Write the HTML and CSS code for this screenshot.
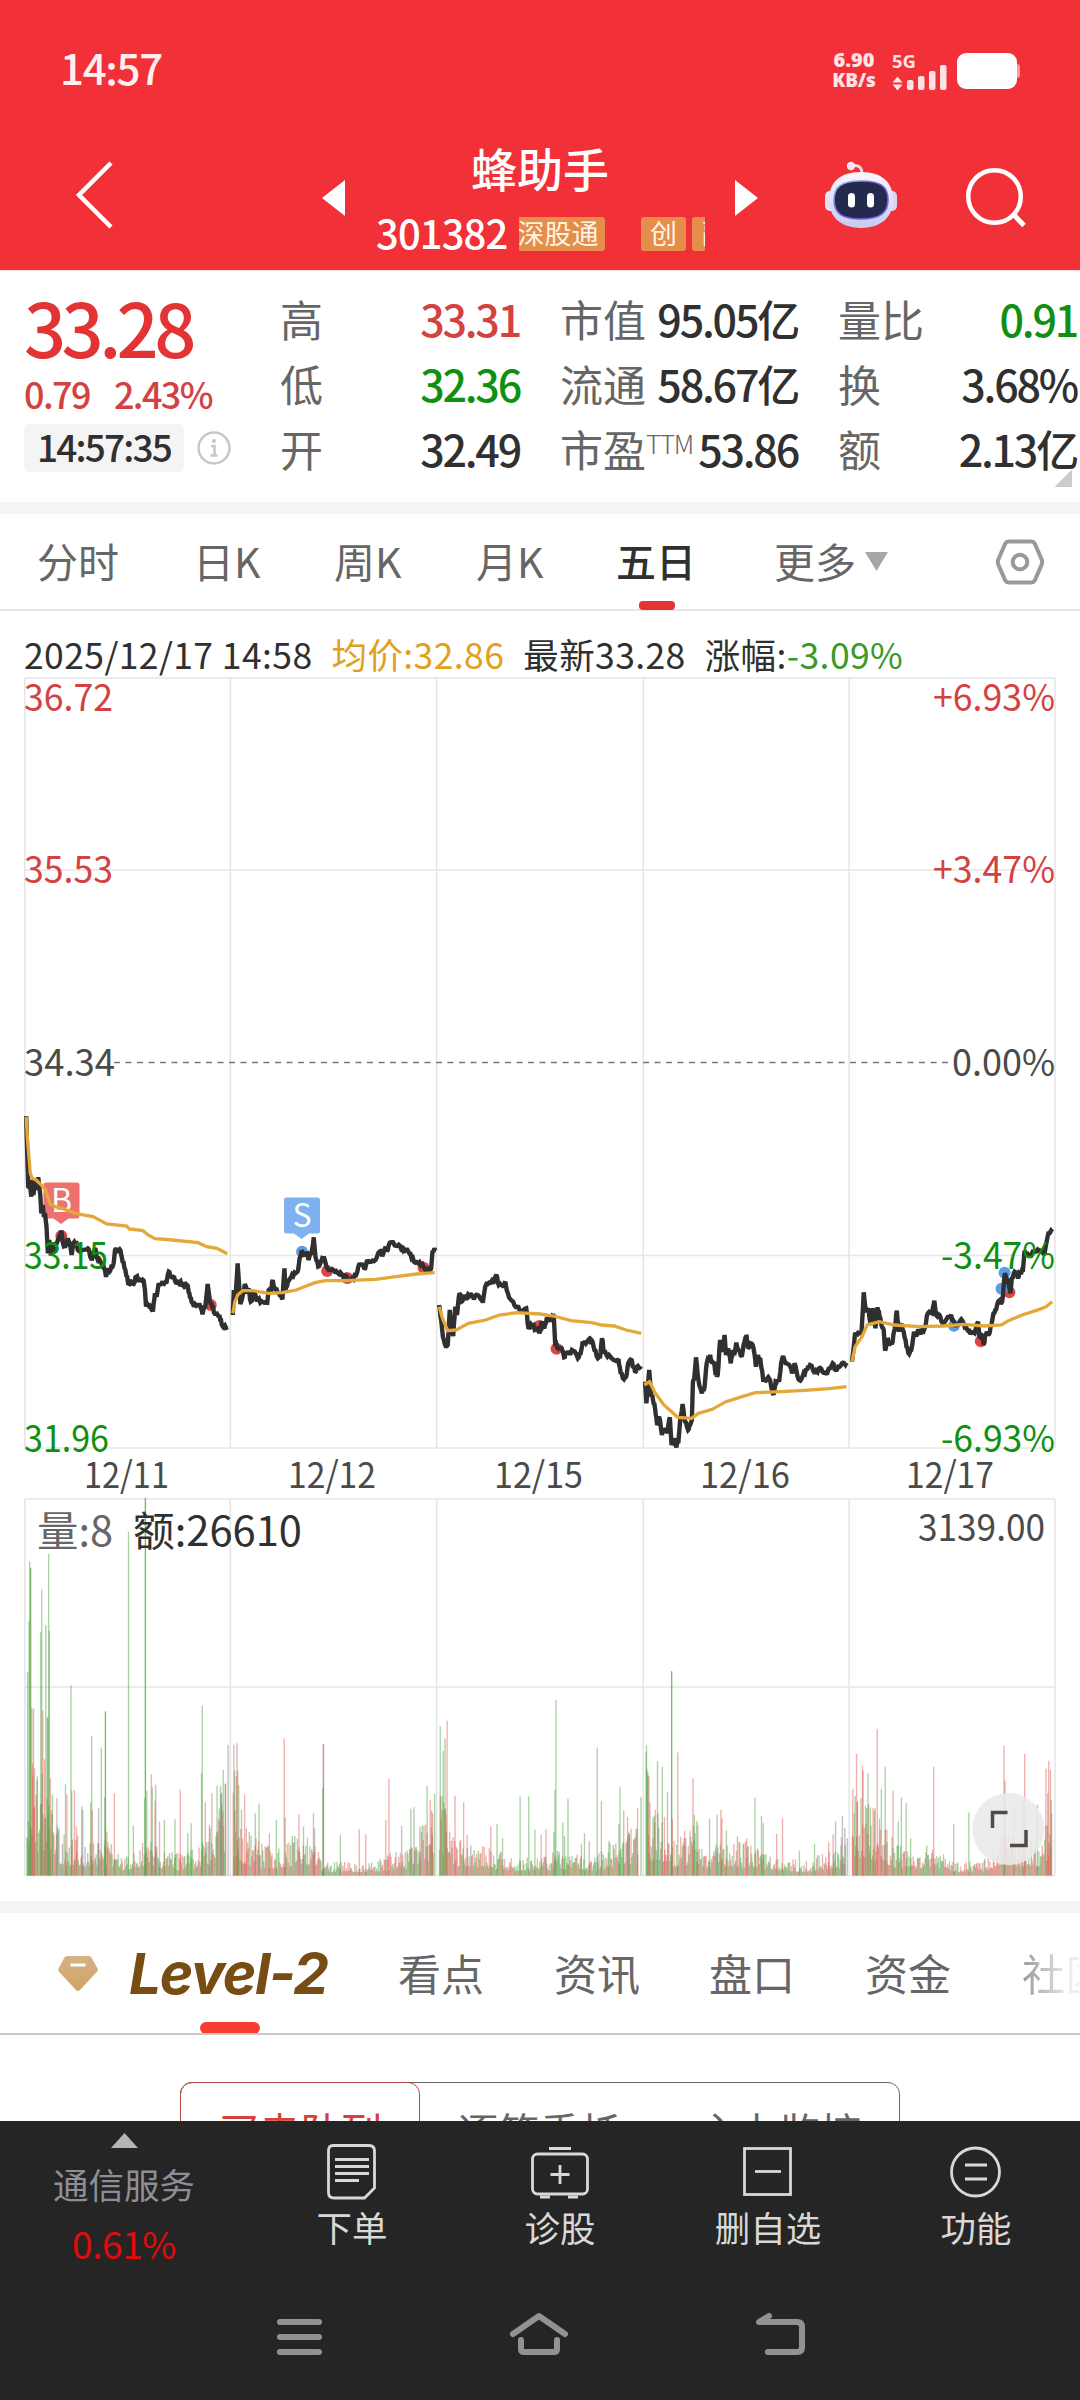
FILE: index.html
```html
<!DOCTYPE html>
<html lang="zh-CN">
<head>
<meta charset="utf-8">
<title>蜂助手 301382</title>
<link rel="stylesheet" href="styles.css">
</head>
<body>
<div class="app">
  <header class="header">
    <div class="status">
      <span class="clock">14:57</span>
      <div class="status-right">
        <div class="speed"><b>6.90</b><b>KB/s</b></div>
        <svg class="signal" width="130" height="40" viewBox="890 52 130 40">
          <text x="892" y="67.5" class="net">5G</text>
          <path d="M897.5 76.5l5 6h-10zM897.5 90.5l5-6h-10z" fill="#ffe3e5"/>
          <g fill="#ffe3e5"><rect x="907" y="80" width="6.5" height="10" rx="2"/><rect x="918" y="76" width="6.5" height="14" rx="2"/><rect x="929" y="71" width="6.5" height="19" rx="2"/><rect x="940" y="65" width="6.5" height="25" rx="2"/></g>
          <rect x="1012" y="64" width="8" height="14" rx="3" fill="#f99ca0"/>
          <rect x="957" y="53" width="60" height="36" rx="9" fill="#fff"/>
        </svg>
      </div>
    </div>
    <div class="nav">
      <svg class="back" width="40" height="70" viewBox="0 0 40 70"><path d="M36 2L4 34l32 32" fill="none" stroke="#fff" stroke-width="4.5"/></svg>
      <svg class="tri" width="23" height="36" viewBox="0 0 23 36"><path d="M23 0v36L0 18z" fill="#fff"/></svg>
      <div class="title">
        <h1>蜂助手</h1>
        <div class="code-row">
          <span class="code">301382</span>
          <div class="tags"><span class="tag tag-cut">深股通</span><span class="tag">创</span><span class="tag tag-next">融</span></div>
        </div>
      </div>
      <svg class="tri" width="23" height="36" viewBox="0 0 23 36"><path d="M0 0v36l23-18z" fill="#fff"/></svg>
      <svg class="robot" width="74" height="70" viewBox="824 160 74 70">
        <defs>
          <linearGradient id="shell" x1="0" y1="0" x2="0" y2="1"><stop offset="0" stop-color="#fdf6fa"/><stop offset=".6" stop-color="#dcdcf6"/><stop offset="1" stop-color="#c5cbf0"/></linearGradient>
          <linearGradient id="rim" x1="0" y1="0" x2="1" y2="1"><stop offset="0" stop-color="#7fd0ee"/><stop offset=".5" stop-color="#7a4fd8"/><stop offset="1" stop-color="#6a6df0"/></linearGradient>
        </defs>
        <path d="M851 166c7-2 11 1 11 8" fill="none" stroke="#f3dcea" stroke-width="3"/>
        <circle cx="851" cy="166" r="4.2" fill="#f6e4ef"/>
        <rect x="825" y="191" width="12" height="20" rx="5" fill="#e6e2f6"/><rect x="885" y="191" width="12" height="20" rx="5" fill="#d9d6f4"/>
        <path d="M861 172c22 0 32 11 32 28s-12 28-32 28-32-11-32-28 10-28 32-28z" fill="url(#shell)"/>
        <path d="M861 181c20 0 27 6 27 19s-8 19-27 19-27-6-27-19 7-19 27-19z" fill="#242a4d" stroke="url(#rim)" stroke-width="1.6"/>
        <rect x="848" y="193" width="7" height="14.500" rx="3.500" fill="#fff"/><rect x="867" y="193" width="7" height="14.500" rx="3.500" fill="#fff"/>
      </svg>
      <svg class="search" width="62" height="62" viewBox="965 166 62 62"><circle cx="994.500" cy="196.500" r="26.300" fill="none" stroke="#fff" stroke-width="4.500"/><path d="M1013.500 214.500l10.500 11" stroke="#fff" stroke-width="5"/></svg>
    </div>
  </header>

  <section class="quote">
    <div class="price-box">
      <strong class="price">33.28</strong>
      <div class="change"><span>0.79</span><span>2.43%</span></div>
      <div class="time-row"><span class="chip">14:57:35</span>
        <svg width="36" height="36" viewBox="0 0 36 36"><circle cx="18" cy="18" r="15.500" fill="none" stroke="#c8c8c8" stroke-width="2.500"/><circle cx="18" cy="11" r="2" fill="#c8c8c8"/><path d="M15 16h3.500v9M14.500 25.500h7" fill="none" stroke="#c8c8c8" stroke-width="2.500"/></svg>
      </div>
    </div>
    <dl class="stats s1"><dt>高</dt><dd class="up">33.31</dd><dt>低</dt><dd class="down">32.36</dd><dt>开</dt><dd>32.49</dd></dl>
    <dl class="stats s2"><dt>市值</dt><dd>95.05亿</dd><dt>流通</dt><dd>58.67亿</dd><dt>市盈<sup>TTM</sup></dt><dd>53.86</dd></dl>
    <dl class="stats s3"><dt>量比</dt><dd class="down">0.91</dd><dt>换</dt><dd>3.68%</dd><dt>额</dt><dd>2.13亿</dd></dl>
    <i class="corner"></i>
  </section>

  <nav class="periods">
    <a>分时</a><a>日K</a><a>周K</a><a>月K</a><a class="on">五日</a>
    <a class="more">更多<svg width="23" height="19" viewBox="0 0 23 19"><path d="M0 0h23L11.500 19z" fill="#a6a6a6"/></svg></a>
    <svg class="gear" width="50" height="48" viewBox="0 0 50 48"><path d="M14 3.500h22q2.500 0 3.700 2l7 16q1 2.500 0 5l-7 16q-1.200 2-3.700 2H14q-2.500 0-3.700-2l-7-16q-1-2.500 0-5l7-16q1.200-2 3.700-2z" fill="none" stroke="#999" stroke-width="4"/><circle cx="25" cy="24" r="7.300" fill="none" stroke="#999" stroke-width="4"/></svg>
  </nav>

  <section class="chart">
    <p class="legend"><span>2025/12/17 14:58</span><span class="avg">均价:32.86</span><span>最新33.28</span><span>涨幅:<em>-3.09%</em></span></p>
    <svg id="plot" width="1080" height="1221" viewBox="0 676 1080 1221">
      <g id="grid" class="grid"></g>
      <path d="M114 1062.500H950" class="mid"/>
      <g id="volume"></g>
      <g id="dots"></g>
      <g class="flag">
        <path d="M46 1182.500h31q2.500 0 2.500 2.500v31q0 2.500-2.500 2.500h-8.500l-7.500 5.500-7.500-5.500H46q-2.500 0-2.500-2.500v-31q0-2.500 2.500-2.500z" fill="#ee7170"/>
        <path d="M286.500 1197.500h31q2.500 0 2.500 2.500v31q0 2.500-2.500 2.500h-8.500l-7.500 5.500-7.500-5.500h-7.500q-2.500 0-2.500-2.500v-31q0-2.500 2.500-2.500z" fill="#7eb1f0"/>
        <text x="61.500" y="1212">B</text><text x="302" y="1227">S</text>
      </g>
      <g id="price" transform="translate(0 1080) scale(.34439 .33333)"></g>
      <g id="labels"></g>
      <g class="expand"><circle cx="1008.500" cy="1829" r="36" fill="#e9e9e9" fill-opacity=".88"/><path d="M1007.500 1812.500H992.500V1828M1010 1845.500h16V1830" fill="none" stroke="#4f4b4a" stroke-width="3.500"/></g>
    </svg>
  </section>

  <nav class="topics">
    <a class="level">
      <svg width="46" height="42" viewBox="0 0 46 42"><defs><linearGradient id="gold" x1="0" y1="0" x2="0" y2="1"><stop offset="0" stop-color="#d6b284"/><stop offset="1" stop-color="#cda468"/></linearGradient></defs><path d="M12 2h22q1.500 0 2.500 1.500l6 11q1 1.500-.3 3L25 36q-2 2-4 0L3.800 17.500q-1.300-1.500-.3-3l6-11Q10.500 2 12 2z" fill="url(#gold)"/><path d="M15.500 11h15" stroke="#fff" stroke-width="3"/></svg>
      <span>Level-2</span>
    </a>
    <a>看点</a><a>资讯</a><a>盘口</a><a>资金</a><a class="fade">社区</a>
  </nav>

  <section class="queue">
    <div class="segments"><span class="on">买卖队列</span><span>逐笔委托</span><span>主力监控</span></div>
  </section>

  <footer class="dock">
    <div class="actions">
      <div class="sector"><svg width="27" height="15" viewBox="0 0 27 15"><path d="M13.500 0L27 15H0z" fill="#b5b5b5"/></svg><span>通信服务</span><b>0.61%</b></div>
      <div class="act"><svg width="60" height="60" viewBox="0 0 60 60"><path d="M11 4.500h36q5.500 0 5.500 5.500v37l-10 10H12q-5.500 0-5.500-5.500V10q0-5.500 4.500-5.500z"/><path d="M13 18.500h34M13 25.500h34M13 32.500h34M13 39.500h24"/></svg><span>下单</span></div>
      <div class="act"><svg width="60" height="60" viewBox="0 0 60 60"><rect x="2.500" y="13" width="55" height="40" rx="5"/><path d="M19 7.500h22M30 24v19M20.500 33.500h19M10 56h10M38 56h10"/></svg><span>诊股</span></div>
      <div class="act"><svg width="60" height="60" viewBox="0 0 60 60"><rect x="6.500" y="7.500" width="46" height="46"/><path d="M17 30.500h26"/></svg><span>删自选</span></div>
      <div class="act"><svg width="60" height="60" viewBox="0 0 60 60"><circle cx="29.500" cy="31" r="24"/><path d="M19 24h22M19 38h22"/></svg><span>功能</span></div>
    </div>
    <div class="system">
      <svg width="52" height="50" viewBox="274 2310 52 50"><path d="M280 2322h39M280 2337h39M280 2352h39"/></svg>
      <svg width="64" height="50" viewBox="508 2310 64 50"><path d="M514 2334l26-18 26 18M522 2340v9q0 3 3 3h30q3 0 3-3v-9"/></svg>
      <svg width="58" height="50" viewBox="752 2310 58 50"><path d="M768 2352h29q5 0 5-5v-20q0-5-5-5h-38l10-6"/></svg>
    </div>
  </footer>
</div>
<script src="chart.js"></script>
</body>
</html>
```

FILE: styles.css
```css
* { box-sizing: border-box; margin: 0; padding: 0; }
body { width: 1080px; height: 2400px; overflow: hidden; background: #fff; color: #303030; font-family: "Noto Sans CJK SC", "Noto Sans", sans-serif; }
.app { display: flex; flex-direction: column; width: 1080px; height: 2400px; overflow: hidden; }
svg { display: block; flex: none; }

.header { height: 270px; background: #f13038; color: #fff; flex: none; }
.status { display: flex; justify-content: space-between; height: 142px; padding: 0 60px; }
.clock { font-size: 42px; font-weight: 500; line-height: 60px; padding-top: 37px; letter-spacing: -1.300px; color: #fff0f0; }
.status-right { display: flex; gap: 12px; padding-top: 52px; }
.speed { display: flex; flex-direction: column; align-items: center; color: #ffe3e5; font: 700 20px/21px "Open Sans", sans-serif; width: 48px; margin-top: -3px; }
.speed b + b { font-size: 19px; letter-spacing: -.2px; }
.net { font: 700 18.500px "Open Sans", sans-serif; fill: #ffe3e5; }
.nav { display: grid; grid-template-columns: 245px 23px 390px 23px 140px 80px; padding-left: 77px; height: 128px; }
.back { margin: 19px 0 0 -2px; }
.tri { margin-top: 38px; }
.title { text-align: center; }
.title h1 { font-size: 46px; line-height: 50px; font-weight: 500; }
.code-row { display: flex; padding-left: 31px; margin-top: 15px; height: 54px; gap: 12px; align-items: center; }
.code { font-size: 40px; font-weight: 500; line-height: 40px; letter-spacing: -.9px; width: 131px; margin-top: -5px; }
.tags { display: flex; width: 186px; overflow: hidden; }
.tag { flex: none; width: 45px; height: 34px; margin-right: 6px; border-radius: 3px; background: #e58d4b; color: #fff3e4; font-size: 27px; line-height: 32px; }
.tag-cut { width: 86px; margin-right: 36px; text-indent: -8px; border-radius: 0 3px 3px 0; white-space: nowrap; }
.tag-next { text-indent: 10px; text-align: left; }
.robot { margin: 18px 0 0 66px; }
.search { margin: 24px 0 0 67px; }

.quote { position: relative; flex: none; height: 244px; display: grid; grid-template-columns: 281px 280px 278px 241px; border-top: 1px solid #ffdfe2; border-bottom: 12px solid #f4f4f4; }
.price-box { padding-left: 24px; }
.price { display: block; font-size: 74px; line-height: 76px; font-weight: 500; letter-spacing: -4.600px; color: #e23434; margin-top: 17px; }
.change { display: flex; gap: 24px; font-size: 36px; line-height: 40px; letter-spacing: -1.600px; font-weight: 500; color: #d34141; margin-top: 9px; }
.time-row { display: flex; align-items: center; gap: 12px; margin-top: 11px; }
.chip { width: 160px; height: 48px; border-radius: 6px; background: #f4f4f4; font-size: 37px; line-height: 45px; letter-spacing: -1.800px; font-weight: 500; text-align: center; }
.stats { display: grid; grid-template-columns: 84px minmax(0, 1fr); grid-auto-rows: 65px; padding-top: 15px; font-size: 43px; line-height: 65px; white-space: nowrap; }
.stats dt { color: #666; position: relative; left: -1px; }
.stats dd { text-align: right; font-weight: 500; letter-spacing: -2.200px; }
.s1 { padding-right: 41px; }
.s2 { padding-right: 41px; }
.s3 { padding-right: 3px; }
.stats sup { font-size: 26px; line-height: 20px; vertical-align: 13px; font-weight: 300; letter-spacing: -1.300px; }
.stats .up { color: #d34141; }
.stats .down { color: #109010; }
.corner { position: absolute; right: 8px; bottom: 15px; width: 18px; height: 17px; background: linear-gradient(136deg, transparent 50%, #ccc 50%); }

.periods { flex: none; height: 97px; display: grid; grid-template-columns: 156px 141px 142px 140px 158px 221px 1fr; padding-left: 37px; border-bottom: 2px solid #e6e6e6; color: #666; font-size: 41px; line-height: 93px; }
.periods .on { position: relative; color: #303030; font-weight: 500; font-size: 40px; }
.periods .on::after { content: ""; position: absolute; left: 23px; bottom: -1px; width: 36px; height: 9px; border-radius: 4px; background: #e23434; }
.more { display: flex; gap: 9px; }
.more svg { margin-top: 38px; }
.gear { margin-top: 24px; }

.chart { flex: none; height: 1290px; }
.legend { display: flex; gap: 19px; height: 65px; padding-left: 24px; font-size: 35.500px; line-height: 86px; letter-spacing: .4px; white-space: nowrap; }
.legend .avg { color: #e0a020; }
.legend em { font-style: normal; color: #389a28; }
.grid path { fill: none; stroke: #e6e6e6; stroke-width: 1.600; }
.mid { stroke: #777; stroke-width: 1.500; stroke-dasharray: 6 5.500; }
.flag text { font: 400 32px "Noto Sans CJK SC", sans-serif; fill: #fff; text-anchor: middle; }
#price polyline { fill: none; vector-effect: non-scaling-stroke; stroke-linejoin: miter; stroke-miterlimit: 2; }
#price .p { stroke: #303030; stroke-width: 4.400; }
#price .a { stroke: #e3a838; stroke-width: 3.300; }
#labels text { font-family: "Noto Sans CJK SC", sans-serif; }

.topics { flex: none; height: 134px; display: grid; grid-template-columns: 343px 156px 155px 156px 157px 57px; padding-left: 55px; border-top: 12px solid #f4f4f4; border-bottom: 2px solid #c8c8c8; color: #666; font-size: 43px; line-height: 118px; white-space: nowrap; overflow: hidden; }
.level { position: relative; display: flex; gap: 28px; }
.level svg { margin-top: 41px; }
.level span { font: italic 700 57px/121px Inter, sans-serif; letter-spacing: -1.400px; color: #774d14; }
.level::after { content: ""; position: absolute; left: 145px; bottom: 0; width: 60px; height: 12px; border-radius: 6px; background: #f93c32; }
.fade { background: linear-gradient(90deg, #999, #eee 85%); -webkit-background-clip: text; background-clip: text; color: transparent; overflow: hidden; }

.queue { flex: none; height: 86px; overflow: hidden; padding: 47px 180px 0; }
.segments { display: flex; height: 98px; border: 1px solid #666; border-radius: 12px; }
.segments span { flex: 1; text-align: center; font-size: 41px; line-height: 95px; color: #666; }
.segments .on { margin: -1px 0 -1px -1px; border: 1px solid #b5453f; border-radius: 12px; color: #d8403c; flex: 0 0 240px; }

.dock { height: 279px; flex: none; background: #252525; }
.actions { display: grid; grid-template-columns: 248px repeat(4, 208px); height: 174px; }
.sector { display: flex; flex-direction: column; align-items: center; padding-top: 12px; color: #8e8e98; font-size: 35.500px; line-height: 50px; }
.sector span { margin-top: 11px; }
.sector b { color: #e00c0c; font-weight: 400; font-size: 37px; margin-top: 9px; letter-spacing: -.4px; }
.act { display: flex; flex-direction: column; align-items: center; padding-top: 20px; color: #d8d8d8; font-size: 35.500px; line-height: 50px; }
.act svg { fill: none; stroke: #d8d8d8; stroke-width: 2.800; }
.act span { margin-top: 1px; }
.system { display: flex; justify-content: space-between; padding: 15px 270px 0 274px; }
.system svg { fill: none; stroke: #929292; stroke-width: 6; stroke-linecap: round; stroke-linejoin: round; }
```

FILE: chart.js
```js
const NS = 'http://www.w3.org/2000/svg';
const byId = id => document.getElementById(id);
function add(parent, tag, attrs, text) {
  const el = document.createElementNS(NS, tag);
  for (const k in attrs) el.setAttribute(k, attrs[k]);
  if (text) el.textContent = text;
  parent.appendChild(el);
}

// Small deterministic generator for minute-level jitter
let seed = 20251217;
const rnd = () => (seed = (seed * 16807) % 2147483647) / 2147483647;

// Grid
const cols = [24.800, 230.300, 436.600, 643.300, 849.200, 1055];
[[678, 1448, [678, 870, 1255.500, 1448]], [1499, 1875.500, [1499, 1687, 1875.500]]].forEach(([top, bottom, rows]) => {
  cols.forEach(x => add(byId('grid'), 'path', { d: `M${x} ${top}V${bottom}` }));
  rows.forEach(y => add(byId('grid'), 'path', { d: `M24.800 ${y}H1055` }));
});

// Price and average series, one pair per trading day; `o` shifts x
const days = [
  { o: 0,
    a: '76,110 80,180 88,280 93,295 105,300 120,315 132,330 145,370 160,380 180,385 225,402 270,410 310,432 368,438 375,447 415,452 430,465 450,476 500,480 575,488 600,500 630,505 660,521',
    p: '76,108 78,180 82,320 88,325 91,350 94,300 97,345 102,300 105,330 111,292 114,320 117,345 120,400 124,375 127,405 131,405 135,440 139,520 143,480 148,525 152,490 156,515 160,488 168,480 172,470 178,452 183,490 190,498 197,475 204,498 208,525 213,490 222,490 226,510 240,510 255,505 262,530 266,540 272,515 278,510 284,540 292,545 300,555 307,585 313,565 320,572 330,550 334,510 338,505 342,518 350,512 356,545 364,570 372,610 380,605 388,612 396,590 402,605 408,600 417,602 421,630 424,680 430,675 437,682 444,695 450,640 455,650 460,615 470,612 476,605 483,610 490,575 496,590 506,592 512,612 522,605 528,618 536,612 543,615 550,640 556,665 563,680 574,675 580,675 588,703 596,680 603,612 610,665 616,680 624,700 630,703 637,705 644,735 650,738 658,750' },
  { o: 0,
    a: '676,700 682,665 690,645 705,632 735,632 780,640 820,638 860,630 880,622 915,608 945,602 1000,602 1090,598 1150,590 1210,582 1262,578',
    p: '676,705 679,630 684,650 690,550 694,610 698,672 704,650 711,612 718,640 722,625 728,665 738,640 748,660 760,665 768,668 776,668 780,630 786,640 792,600 798,625 804,630 812,645 820,658 826,565 829,630 836,605 845,592 855,578 864,575 870,535 876,512 884,528 892,520 896,540 904,520 911,472 916,530 924,560 932,545 940,530 948,560 958,570 968,570 980,578 992,582 998,590 1006,588 1014,600 1022,595 1034,585 1044,550 1052,555 1058,568 1066,540 1078,545 1090,540 1102,515 1110,528 1118,505 1126,510 1132,488 1146,496 1158,494 1168,504 1176,512 1186,515 1192,522 1202,545 1214,550 1226,552 1236,572 1244,578 1252,565 1256,512 1264,512' },
  { o: 1568,
    a: '-293,680 -283,715 -268,752 -243,750 -208,730 -158,720 -118,705 -68,698 0,702 40,708 90,722 150,728 180,735 215,738 250,750 294,760',
    p: '-293,675 -287,720 -282,770 -274,798 -268,795 -262,690 -258,745 -252,768 -246,680 -241,705 -234,640 -228,665 -220,645 -212,655 -202,640 -192,658 -182,645 -174,655 -166,668 -159,620 -148,608 -136,610 -127,585 -120,615 -108,618 -100,610 -90,652 -78,665 -66,680 -56,692 -40,685 -34,742 -22,738 -12,748 0,755 6,725 12,745 20,712 28,725 34,708 40,708 44,790 52,805 60,800 70,832 76,815 86,820 96,812 110,835 118,820 124,785 134,790 142,778 150,780 158,810 168,835 174,835 180,775 186,815 196,830 208,835 228,838 234,878 244,898 250,890 256,850 264,840 272,862 278,875 284,858 294,868' },
  { o: 1568,
    a: '303,915 318,905 335,940 360,975 400,1012 440,1015 460,1000 500,988 540,965 580,952 625,938 700,935 770,931 840,926 890,920',
    p: '305,905 309,970 313,920 317,870 322,935 328,960 334,985 340,1035 346,1010 354,1065 362,1045 370,1060 377,1012 382,1095 390,1075 396,1102 402,1085 407,1020 414,972 421,1025 430,1050 436,1035 441,1020 444,905 448,895 453,832 460,900 466,925 470,940 478,920 484,850 494,825 500,850 506,850 510,885 516,885 523,780 530,815 536,765 540,825 546,805 554,850 560,810 564,825 570,788 576,810 586,830 594,785 600,770 604,805 612,790 620,805 627,860 633,825 640,840 648,900 660,895 668,900 678,945 684,905 694,905 700,850 706,828 716,850 724,855 732,880 739,850 748,890 756,902 766,878 776,870 784,855 798,880 810,865 820,875 830,880 842,865 850,850 858,870 870,860 880,848 890,848' },
  { o: 1568,
    a: '906,845 915,800 935,770 950,735 985,725 1030,735 1100,740 1170,738 1230,733 1290,738 1340,735 1360,722 1400,705 1450,688 1470,680 1487,665',
    p: '906,845 911,800 915,758 920,768 926,755 933,765 940,637 946,690 952,685 960,735 966,685 974,745 980,682 986,710 992,738 998,750 1002,812 1008,780 1016,792 1024,785 1030,745 1036,692 1042,755 1048,735 1056,755 1064,800 1072,822 1078,810 1086,755 1092,765 1098,748 1106,762 1118,742 1126,700 1138,700 1145,662 1150,705 1160,705 1168,728 1180,718 1192,708 1198,718 1210,735 1220,722 1230,730 1240,748 1250,762 1262,760 1272,725 1276,770 1282,765 1288,795 1294,765 1306,758 1314,715 1322,690 1330,665 1342,665 1350,580 1358,600 1366,640 1370,595 1378,575 1388,595 1394,578 1402,575 1407,512 1420,528 1436,515 1450,512 1466,515 1476,460 1488,456' }
];
const parse = (s, o) => s.split(' ').map(q => { const [x, y] = q.split(',').map(Number); return [x + o, y]; });
days.forEach(d => {
  const key = parse(d.p, d.o), out = [];
  key.forEach((pt, i) => {
    out.push(pt);
    const nx = key[i + 1];
    if (nx && nx[0] - pt[0] > 5) {
      for (let k = 1; k < 3; k++) out.push([pt[0] + (nx[0] - pt[0]) * k / 3, pt[1] + (nx[1] - pt[1]) * k / 3 + (rnd() - .5) * 14]);
    }
  });
  add(byId('price'), 'polyline', { class: 'p', points: out.map(q => q.map(v => v.toFixed(1)).join()).join(' ') });
  add(byId('price'), 'polyline', { class: 'a', points: parse(d.a, d.o).join(' ') });
});

// Trade markers
[[178, 468, 'r'], [612, 675, 'r'], [950, 573, 'r'], [1008, 594, 'r'], [1230, 563, 'r'], [1566, 738, 'r'], [877, 515, 'b'],
 [1616, 806, 'r'], [2848, 784, 'r'], [2931, 637, 'r'], [2770, 737, 'b'], [2917, 578, 'b'], [2908, 626, 'b']].forEach(([x, y, c]) =>
  add(byId('dots'), 'circle', { cx: x * .34439, cy: 1080 + y / 3, r: 6, fill: c === 'r' ? '#dc4646' : '#5f9be3' }));

// Volume: level envelopes and notable bars per day
const vol = [
  { o: 0, from: 78, to: 656, g: .6, env: '78,900 95,880 110,960 140,930 155,1010 175,1090 240,1100 330,1100 350,1150 420,1100 470,1130 540,1140 600,1100 656,970',
    s: '80,577,g 84,423,g 86,246,r 88,264,g 89,264,g 92,685,r 97,687,g 94,850,r 100,865,r 108,890,g 118,457,g 121,330,g 124,692,r 129,838,r 133,436,g 137,712,g 139,715,g 141,222,g 143,453,g 146,895,r 152,945,g 165,955,k 190,912,g 194,945,r 206,616,g 208,933,g 216,930,r 222,1040,r 237,980,g 240,990,k 266,768,g 263,970,g 268,992,r 294,804,k 306,695,g 306,695,g 304,952,g 286,985,k 310,1055,r 332,940,r 373,156,g 387,1038,g 422,54,g 422,54,g 420,955,g 426,933,g 439,883,r 442,922,g 452,915,k 450,963,r 463,1025,r 477,1020,g 508,1018,g 523,930,r 545,1060,g 555,1030,g 587,678,g 585,880,g 596,967,r 615,940,r 608,1035,r 630,918,g 640,918,k 643,938,g 648,870,g 655,912,r 662,795,k' },
  { o: 0, from: 677, to: 1258, g: .4, env: '677,990 700,1070 740,1100 800,1130 860,1090 890,1095 920,1120 960,1155 1080,1155 1180,1120 1240,1050 1258,1010',
    s: '679,795,r 688,790,k 681,872,g 690,872,r 693,915,g 686,890,r 701,990,g 710,945,r 715,1045,r 741,1000,k 752,972,g 802,1020,g 782,1060,r 825,776,r 828,1013,g 868,1003,r 881,1040,g 910,1000,r 913,1045,k 939,792,r 939,792,k 937,925,g 988,1065,g 1043,1048,r 1062,1063,r 1129,897,r 1120,1020,r 1166,1038,k 1193,987,g 1202,982,k 1219,1040,k 1240,918,g 1249,960,r 1253,992,r 1256,1000,r 1262,942,g' },
  { o: 1568, from: -292, to: 286, g: .5, env: '-292,990 -268,1050 -238,1100 -168,1120 -68,1145 30,1140 45,1100 80,1140 160,1140 230,1100 286,1070',
    s: '-290,740,g -281,813,g -276,777,g -270,722,r -285,990,g -273,1005,r -247,948,r -222,967,r -212,1065,r -143,1040,r -125,1033,g -109,1075,g -58,950,g -33,950,g -15,1050,g 3,1065,r 17,1048,r 46,660,g 43,930,g 40,1057,g 66,1027,g 71,1068,g 81,957,g 120,1092,r 129,1060,g 143,1083,r 166,804,g 178,963,r 200,1083,g 232,921,g 229,1033,g 243,992,r 254,1012,r 259,1063,g 283,985,r 293,951,g' },
  { o: 1568, from: 308, to: 888, g: .55, env: '308,890 322,1050 335,1030 380,1110 450,1070 480,1120 600,1110 700,1145 780,1155 840,1120 888,1110',
    s: '309,796,g 313,877,g 316,890,r 319,968,r 328,1012,g 332,1008,g 341,844,g 355,861,g 370,937,k 361,1012,r 382,574,g 382,574,g 384,1018,r 400,818,r 420,1053,r 444,895,r 448,1005,g 455,1023,g 458,1035,r 492,1017,k 514,1005,k 525,990,r 528,1015,r 541,1052,g 573,1070,g 600,1075,r 624,954,g 643,1008,g 648,1030,g 687,1062,r 704,1015,r 753,1113,g 797,1092,g 838,1087,r 851,1063,r 858,1025,k 878,1008,k 885,1045,k 875,1072,r 892,1075,k' },
  { o: 1568, from: 907, to: 1487, g: .35, env: '907,1010 940,1010 1000,1070 1040,1120 1140,1120 1220,1160 1300,1145 1340,1090 1400,1100 1450,1100 1487,1010',
    s: '908,927,r 919,822,r 915,948,g 921,965,r 936,858,r 938,873,r 945,978,g 952,880,g 959,983,g 967,985,r 973,985,g 979,747,r 991,927,g 1002,861,g 1007,1050,r 1025,933,r 1040,1025,g 1049,953,g 1063,969,g 1076,1075,g 1143,861,r 1201,1033,g 1245,998,g 1347,798,r 1350,903,r 1376,985,r 1407,822,r 1402,965,r 1444,975,g 1469,867,r 1477,843,r 1482,870,r 1484,960,g 1474,940,r' }
];
const tint = { g: '#46a038', r: '#d9544c', k: '#777' };
function bar(x, y, c, o) {
  const h = (1187 - y) / 3;
  add(byId('volume'), 'rect', { x: (x * .34439 - .6).toFixed(2), y: (1875.500 - h).toFixed(1), width: 1.350, height: h.toFixed(1), fill: tint[c], 'fill-opacity': o });
}
vol.forEach(d => {
  const env = parse(d.env, d.o);
  for (let x = d.from + d.o; x <= d.to + d.o; x += 2.450) {
    let i = 0;
    while (i < env.length - 2 && env[i + 1][0] < x) i++;
    const [x0, y0] = env[i], [x1, y1] = env[i + 1];
    const level = 1187 - (y0 + (y1 - y0) * (x - x0) / (x1 - x0));
    const c = rnd() < .12 ? 'k' : rnd() < d.g ? 'g' : 'r';
    bar(x, 1187 - level * (.3 + 1.050 * Math.pow(rnd(), 1.500)), c, .46);
  }
  d.s.split(' ').forEach(q => { const [x, y, c] = q.split(','); bar(+x + d.o, +y, c, .46); });
});

// Axis labels: x, baseline, width, size, colour, text
[[24, 710.500, 89, 37, '#d34141', '36.72'], [24, 883, 89, 37, '#d34141', '35.53'], [24, 1075.500, 91, 37, '#4a4a4a', '34.34'],
 [24, 1268.500, 84, 37, '#109010', '33.15'], [24, 1451.500, 85, 37, '#109010', '31.96'],
 [933, 710.500, 122, 37, '#d34141', '+6.93%'], [933, 883, 122, 37, '#d34141', '+3.47%'], [952, 1075.500, 103, 37, '#4a4a4a', '0.00%'],
 [941, 1268.500, 114, 37, '#109010', '-3.47%'], [941, 1451.500, 114, 37, '#109010', '-6.93%'],
 [84, 1488, 85, 36, '#4a4a4a', '12/11'], [288, 1488, 88, 36, '#4a4a4a', '12/12'], [494, 1488, 89, 36, '#4a4a4a', '12/15'],
 [700, 1488, 90, 36, '#4a4a4a', '12/16'], [906, 1488, 88, 36, '#4a4a4a', '12/17'],
 [37, 1546, 76, 41, '#666', '量:8'], [133, 1546, 169, 41, '#303030', '额:26610'], [918, 1540.500, 127, 37, '#4a4a4a', '3139.00']
].forEach(([x, y, w, s, c, t]) => add(byId('labels'), 'text', { x, y, textLength: w, lengthAdjust: 'spacingAndGlyphs', 'font-size': s, fill: c }, t));
```
